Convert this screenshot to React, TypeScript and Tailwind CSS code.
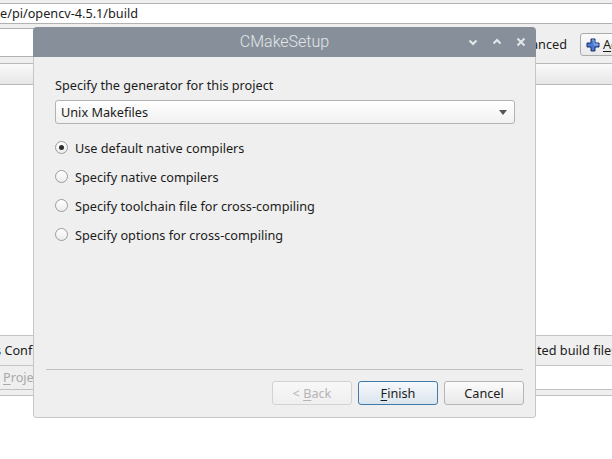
import React from "react";

function Radio({ checked, label }: { checked?: boolean; label: string }) {
  return (
    <div className="flex items-center h-[29px]">
      <div className="w-[13px] h-[13px] rounded-full border border-[#9c9c9c] bg-gradient-to-b from-white to-[#ececec] flex items-center justify-center">
        {checked && <div className="w-[5px] h-[5px] rounded-full bg-[#2e2e2e]" />}
      </div>
      <span className="ml-[7px] leading-[18px]">{label}</span>
    </div>
  );
}

export default function App() {
  return (
    <div className="relative w-[612px] h-[459px] overflow-hidden bg-white text-[12.7px] text-[#1c1c1c] font-['Noto_Sans',sans-serif]">
      {/* background CMake window */}
      <div className="flex flex-col">
        <div className="h-[3px] bg-[#efefef]" />
        <div className="h-[21px] border-y border-[#b2b2b2] bg-white flex items-center whitespace-nowrap leading-none">
          <span>e/pi/opencv-4.5.1/build</span>
        </div>
        <div className="h-[4px] bg-[#efefef]" />
        <div className="h-[29px] bg-[#efefef] flex items-start">
          <div className="w-[80px] h-[29px] bg-white border-y border-[#b2b2b2]" />
          <div className="ml-auto flex items-center h-[23px] mt-[5px] whitespace-nowrap">
            <span className="leading-none">Advanced</span>
            <div className="ml-[13px] mr-[-60px] w-[92px] h-[23px] rounded-[3px] border border-[#ababab] bg-gradient-to-b from-[#fbfbfb] to-[#e9e9e9] flex items-center pl-[5px]">
              <svg width="14" height="14" viewBox="0 0 14 14">
                <path
                  d="M5 1h4v4h4v4h-4v4h-4v-4h-4v-4h4z"
                  fill="#4a7bd0"
                  stroke="#1d2f6b"
                  strokeWidth="1"
                />
                <path d="M6 2h2v4h4v1h-4" fill="none" stroke="#9cc0f3" strokeWidth="0.8" />
              </svg>
              <span className="ml-[3px] leading-none">
                <span className="underline underline-offset-2">A</span>dd Entry
              </span>
            </div>
          </div>
        </div>
        <div className="h-[6px] bg-[#efefef]" />
        <div className="h-[22px] border-y border-[#b9b9b9] bg-gradient-to-b from-[#fafafa] to-[#e6e6e6]" />
        <div className="h-[250px] bg-white" />
        <div className="h-[31px] border-y border-[#c4c4c4] bg-[#efefef] flex items-center whitespace-nowrap">
          <div className="w-[33px] overflow-hidden">
            <span className="block ml-[-5px]">s Configure</span>
          </div>
          <div className="flex-1" />
          <div className="w-[75px] overflow-hidden">
            <span className="block">ted build files.</span>
          </div>
        </div>
        <div className="h-[23px] flex whitespace-nowrap">
          <div className="w-[33px] bg-[#efefef] overflow-hidden flex items-center pl-[3px] text-[#a9a9a9]">
            <span>
              <span className="underline underline-offset-2">P</span>roject
            </span>
          </div>
          <div className="flex-1 bg-white" />
        </div>
        <div className="h-[7px] border-y border-[#c0c0c0] bg-[#efefef]" />
      </div>

      {/* CMakeSetup dialog */}
      <div className="absolute left-[33px] top-[27px] w-[503px] h-[391px] flex flex-col rounded-t-[4px] rounded-b-[3px] overflow-hidden">
        <div className="h-[30px] bg-[#87909a] grid grid-cols-[1fr_auto_1fr] items-center">
          <div />
          <div className="font-['Roboto',sans-serif] font-light text-[16px] text-[#e2e5e8] leading-none">
            CMakeSetup
          </div>
          <div className="flex justify-end items-center pr-[3px]">
            <div className="w-[24px] h-[24px] flex items-center justify-center">
              <svg width="10" height="8" viewBox="0 0 10 8">
                <path d="M1.5 2.5L5 6L8.5 2.5" fill="none" stroke="#e4e7ea" strokeWidth="2" />
              </svg>
            </div>
            <div className="w-[24px] h-[24px] flex items-center justify-center">
              <svg width="10" height="8" viewBox="0 0 10 8">
                <path d="M1.5 5.5L5 2L8.5 5.5" fill="none" stroke="#e4e7ea" strokeWidth="2" />
              </svg>
            </div>
            <div className="w-[24px] h-[24px] flex items-center justify-center">
              <svg width="10" height="10" viewBox="0 0 10 10">
                <path d="M1.5 1.5L8.5 8.5M8.5 1.5L1.5 8.5" fill="none" stroke="#e4e7ea" strokeWidth="2" />
              </svg>
            </div>
          </div>
        </div>
        <div className="flex-1 flex flex-col bg-[#efefef] border-x border-b border-[#c6c6c6] rounded-b-[3px]">
          <div className="pl-[21px] pr-[20px] pt-[19px] flex flex-col">
            <div className="leading-[18px]">Specify the generator for this project</div>
            <div className="mt-[6px] h-[24px] rounded-[3px] border border-[#b3b3b3] bg-gradient-to-b from-white to-[#f1f1f1] flex items-center pl-[5px] pr-[7px]">
              <span className="leading-none">Unix Makefiles</span>
              <svg className="ml-auto" width="8" height="5" viewBox="0 0 8 5">
                <path d="M0 0h8L4 5z" fill="#555" />
              </svg>
            </div>
            <div className="mt-[9px] flex flex-col">
              <Radio checked label="Use default native compilers" />
              <Radio label="Specify native compilers" />
              <Radio label="Specify toolchain file for cross-compiling" />
              <Radio label="Specify options for cross-compiling" />
            </div>
          </div>
          <div className="flex-1" />
          <div className="mx-[12px] h-px bg-[#c2c2c2]" />
          <div className="mt-[11px] mb-[12px] pr-[11px] flex justify-end gap-[6px]">
            <div className="w-[80px] h-[24px] rounded-[3px] border border-[#d3d3d3] bg-gradient-to-b from-[#f8f8f8] to-[#efefef] flex items-center justify-center text-[#b4b4b4] leading-none">
              <span>
                &lt; <span className="underline underline-offset-2">B</span>ack
              </span>
            </div>
            <div className="w-[80px] h-[24px] rounded-[3px] border border-[#3f7aab] bg-gradient-to-b from-[#f6f9fc] to-[#dbe4ed] flex items-center justify-center leading-none">
              <span>
                <span className="underline underline-offset-2">F</span>inish
              </span>
            </div>
            <div className="w-[80px] h-[24px] rounded-[3px] border border-[#b5b5b5] bg-gradient-to-b from-[#fbfbfb] to-[#e9e9e9] flex items-center justify-center leading-none">
              <span>Cancel</span>
            </div>
          </div>
        </div>
      </div>
    </div>
  );
}
